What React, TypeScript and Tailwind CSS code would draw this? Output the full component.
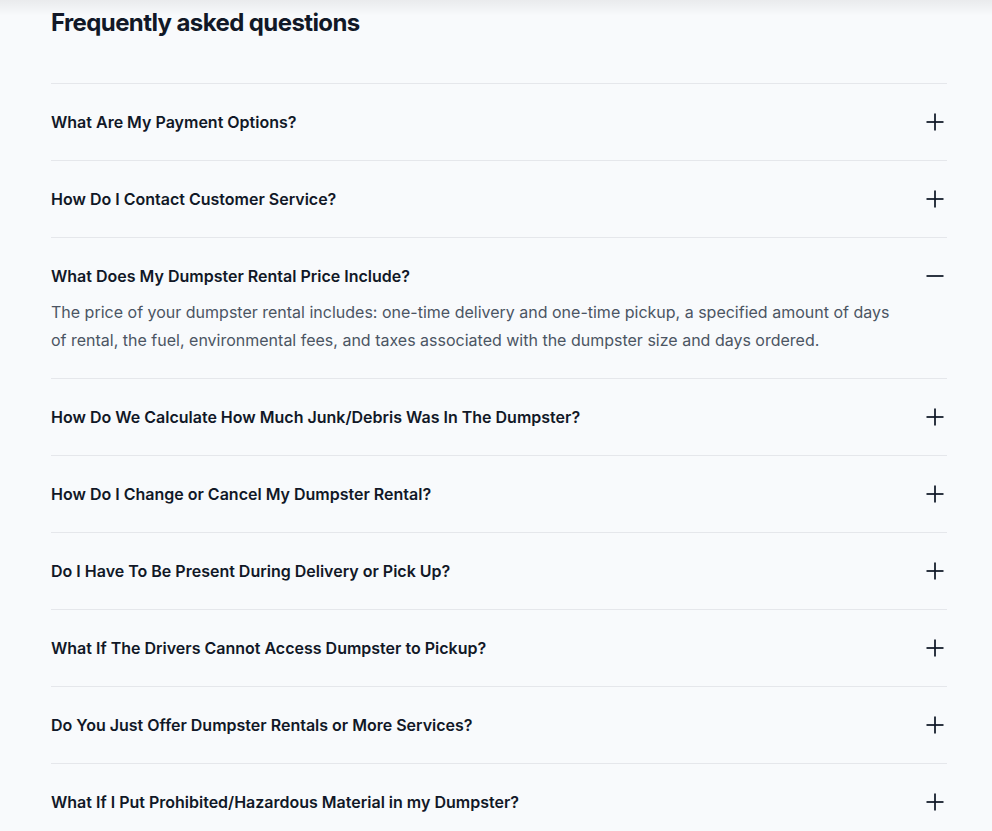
import React from 'react';

const faqs = [
  { q: 'What Are My Payment Options?', a: '' },
  { q: 'How Do I Contact Customer Service?', a: '' },
  {
    q: 'What Does My Dumpster Rental Price Include?',
    a: 'The price of your dumpster rental includes: one-time delivery and one-time pickup, a specified amount of days of rental, the fuel, environmental fees, and taxes associated with the dumpster size and days ordered.',
  },
  { q: 'How Do We Calculate How Much Junk/Debris Was In The Dumpster?', a: '' },
  { q: 'How Do I Change or Cancel My Dumpster Rental?', a: '' },
  { q: 'Do I Have To Be Present During Delivery or Pick Up?', a: '' },
  { q: 'What If The Drivers Cannot Access Dumpster to Pickup?', a: '' },
  { q: 'Do You Just Offer Dumpster Rentals or More Services?', a: '' },
  { q: 'What If I Put Prohibited/Hazardous Material in my Dumpster?', a: '' },
];

const Toggle: React.FC<{ open: boolean }> = ({ open }) => (
  <svg width="24" height="24" viewBox="0 0 24 24" fill="none" stroke="#111827" strokeWidth="1.75">
    <path d="M3.5 12h17" />
    {!open && <path d="M12 3.5v17" />}
  </svg>
);

const App: React.FC = () => {
  const [openIndex, setOpenIndex] = React.useState<number | null>(2);

  return (
    <div className="relative min-h-[831px] bg-[#f8fafc] font-['Inter','Liberation_Sans',sans-serif]">
      <div className="pointer-events-none absolute inset-x-0 top-0 h-4 bg-gradient-to-b from-black/[0.06] to-transparent" />
      <div className="ml-[51px] w-[896px] pt-[7px]">
        <h2 className="text-2xl font-bold leading-8 tracking-tight text-[#111827]">Frequently asked questions</h2>
        <div className="mt-[44px]">
          {faqs.map((item, i) => {
            const open = openIndex === i;
            return (
              <div key={item.q} className="border-t border-[#e5e7eb]">
                <button
                  type="button"
                  className="flex w-full items-center justify-between pt-[26px] pb-[26px] text-left"
                  onClick={() => setOpenIndex(open ? null : i)}
                >
                  <span className="text-base font-semibold leading-6 text-[#111827]">{item.q}</span>
                  <Toggle open={open} />
                </button>
                {open && item.a && (
                  <p className="-mt-[16px] pb-6 pr-12 text-base leading-7 text-[#4b5563]">{item.a}</p>
                )}
              </div>
            );
          })}
        </div>
      </div>
    </div>
  );
};

export default App;
